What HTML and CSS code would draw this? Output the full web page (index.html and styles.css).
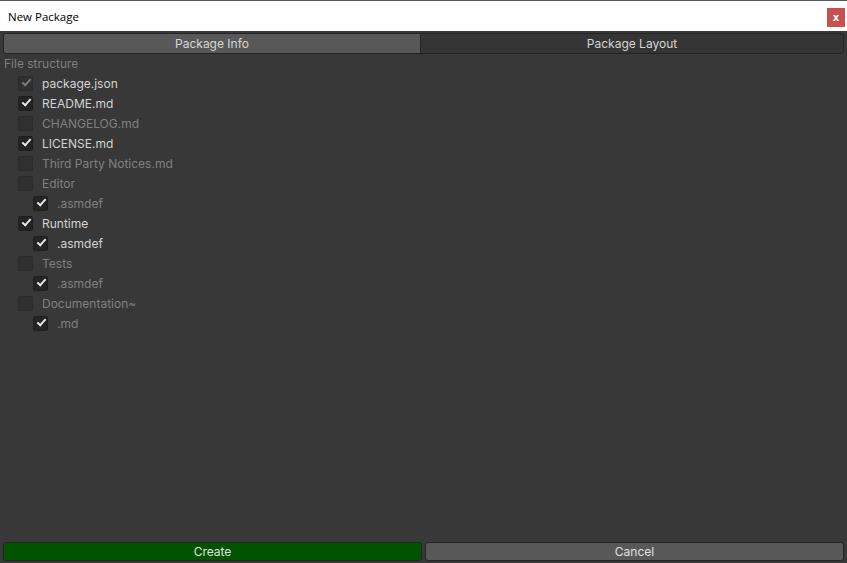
FILE: index.html
```html
<!DOCTYPE html>
<html>
<head>
<meta charset="utf-8">
<link rel="stylesheet" href="styles.css">
</head>
<body>
<div class="window">
  <div class="titlebar">
    <span class="title">New Package</span>
    <span class="close">x</span>
  </div>
  <div class="content">
    <div class="tabs">
      <div class="tab active">Package Info</div>
      <div class="tab">Package Layout</div>
    </div>
    <div class="section-label">File structure</div>
    <div class="list">
      <div class="row dim-check"><span class="cb on faded"></span><span class="lbl">package.json</span></div>
      <div class="row"><span class="cb on"></span><span class="lbl">README.md</span></div>
      <div class="row"><span class="cb off"></span><span class="lbl dim">CHANGELOG.md</span></div>
      <div class="row"><span class="cb on"></span><span class="lbl">LICENSE.md</span></div>
      <div class="row"><span class="cb off"></span><span class="lbl dim">Third Party Notices.md</span></div>
      <div class="row"><span class="cb off"></span><span class="lbl dim">Editor</span></div>
      <div class="row sub"><span class="cb on"></span><span class="lbl dim">.asmdef</span></div>
      <div class="row"><span class="cb on"></span><span class="lbl">Runtime</span></div>
      <div class="row sub"><span class="cb on"></span><span class="lbl">.asmdef</span></div>
      <div class="row"><span class="cb off"></span><span class="lbl dim">Tests</span></div>
      <div class="row sub"><span class="cb on"></span><span class="lbl dim">.asmdef</span></div>
      <div class="row"><span class="cb off"></span><span class="lbl dim">Documentation~</span></div>
      <div class="row sub"><span class="cb on"></span><span class="lbl dim">.md</span></div>
    </div>
    <div class="footer">
      <div class="btn create">Create</div>
      <div class="btn cancel">Cancel</div>
    </div>
  </div>
</div>
</body>
</html>
```
FILE: styles.css
```css
html, body {
  margin: 0;
  padding: 0;
  background: #383838;
}
.window {
  width: 847px;
  height: 563px;
  display: flex;
  flex-direction: column;
  box-sizing: border-box;
  border-top: 1px solid #5a5a5a;
}
.titlebar {
  height: 30px;
  background: #ffffff;
  display: flex;
  align-items: center;
  justify-content: space-between;
  padding-left: 8px;
  padding-right: 2px;
}
.title {
  font-family: "Open Sans", "Noto Sans", sans-serif;
  font-size: 11.5px;
  color: #000;
}
.close {
  width: 18px;
  height: 19px;
  background: #c75050;
  color: #fff;
  font-family: "DejaVu Sans", sans-serif;
  font-weight: bold;
  font-size: 10px;
  display: flex;
  align-items: center;
  justify-content: center;
  margin-top: 2px;
}
.content {
  flex: 1;
  display: flex;
  flex-direction: column;
  padding: 2px 3px 2px 3px;
  font-family: Inter, Roboto, sans-serif;
  font-size: 12px;
  color: #d2d2d2;
}
.tabs {
  display: flex;
  height: 19px;
  border: 1px solid #242424;
  border-radius: 3px;
  overflow: hidden;
  background: #353535;
}
.tab {
  flex: 1;
  display: flex;
  align-items: center;
  justify-content: center;
  color: #d6d6d6;
  font-size: 12px;
}
.tab.active {
  flex: 0 0 416px;
  background: #585858;
  border-right: 1px solid #242424;
}
.section-label {
  margin-top: 1px;
  padding-left: 1px;
  height: 18px;
  line-height: 18px;
  color: #7f7f7f;
}
.list {
  flex: 1;
  display: flex;
  flex-direction: column;
  padding-left: 15px;
}
.row {
  height: 20px;
  display: flex;
  align-items: center;
  gap: 9px;
}
.row.sub {
  padding-left: 15px;
}
.lbl {
  color: #d4d4d4;
}
.lbl.dim {
  color: #808080;
}
.cb {
  width: 13px;
  height: 13px;
  border: 1px solid #1e1e1e;
  border-radius: 2px;
  background: #242424;
  position: relative;
  box-sizing: content-box;
}
.cb.off {
  background: #303030;
  border-color: #2b2b2b;
}
.cb.on::after {
  content: "";
  position: absolute;
  left: 3px;
  top: 2px;
  width: 7px;
  height: 3px;
  border-left: 2px solid #e8e8e8;
  border-bottom: 2px solid #e8e8e8;
  transform: rotate(-48deg);
  transform-origin: center;
}
.cb.faded {
  background: #303030;
  border-color: #2b2b2b;
}
.cb.faded::after {
  border-color: #7c7c7c;
}
.footer {
  display: flex;
  gap: 3px;
  height: 19px;
}
.btn {
  flex: 1;
  display: flex;
  align-items: center;
  justify-content: center;
  border: 1px solid #242424;
  border-radius: 3px;
  color: #e0e0e0;
}
.btn.create {
  flex: 0 0 417px;
  background: #005400;
}
.btn.cancel {
  background: #585858;
}
```
